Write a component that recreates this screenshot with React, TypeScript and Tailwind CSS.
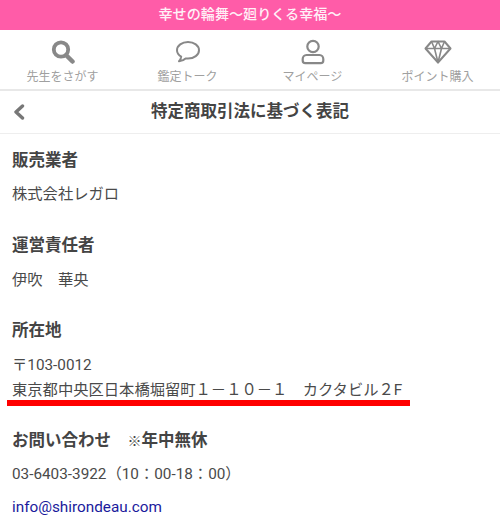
import React from "react";

const font = { fontFamily: '"Roboto","Noto Sans CJK JP","Noto Sans",sans-serif' };

function Nav({ label, children }: { label: string; children: React.ReactNode }) {
  return (
    <div className="flex w-[125px] flex-col items-center">
      <div className="flex h-[26px] items-center justify-center">{children}</div>
      <div className="mt-[5px] text-[12px] leading-[14px] text-[#a0a0a0]">{label}</div>
    </div>
  );
}

function Section({ title, children, className, bodyClass }: { title: React.ReactNode; children: React.ReactNode; className: string; bodyClass: string }) {
  return (
    <section className={className}>
      <h2 className="text-[16.5px] font-bold leading-[24px] text-[#444444]">{title}</h2>
      <div className={bodyClass}>{children}</div>
    </section>
  );
}

export default function App() {
  return (
    <div className="relative h-[526px] w-[500px] overflow-hidden bg-white" style={font}>
      <div className="flex h-[30px] items-center justify-center bg-[#ff5ca8] text-[14.1px] font-medium text-[#fff0f7]">
        幸せの輪舞～廻りくる幸福～
      </div>
      <nav className="flex h-[61px] border-b-2 border-[#e8e8e8] pt-[9px]">
        <Nav label="先生をさがす">
          <svg width="26" height="24" viewBox="0 0 26 24" fill="none" stroke="#888888">
            <circle cx="11" cy="9.5" r="7.2" strokeWidth="3.8" />
            <path d="M16.5 15.5 L22.5 21.5" strokeWidth="4.5" strokeLinecap="round" />
          </svg>
        </Nav>
        <Nav label="鑑定トーク">
          <svg width="26" height="24" viewBox="0 0 26 24" fill="none" stroke="#888888" strokeWidth="2">
            <path d="M13 2C6.9 2 2 5.6 2 10.2c0 2.7 1.7 5 4.2 6.5-.2 1.7-1 3.4-2.2 4.6 2.6-.3 5-1.4 6.6-2.9 .8.1 1.6.2 2.4.2 6.1 0 11-3.7 11-8.4S19.1 2 13 2Z" strokeLinejoin="round" />
          </svg>
        </Nav>
        <Nav label="マイページ">
          <svg width="24" height="26" viewBox="0 0 24 26" fill="none" stroke="#888888" strokeWidth="2.2">
            <circle cx="12" cy="7.5" r="5.7" />
            <path d="M5.5 16h13c2.2 0 3.8 1.8 3.8 4v1.5c0 1.6-1 2.7-2.6 2.7H4.3c-1.6 0-2.6-1.1-2.6-2.7V20c0-2.2 1.6-4 3.8-4Z" />
          </svg>
        </Nav>
        <Nav label="ポイント購入">
          <svg width="28" height="24" viewBox="0 0 28 24" fill="none" stroke="#888888" strokeWidth="2" strokeLinejoin="round">
            <path d="M7.5 1.5h13l6 7L14 22.5 1.5 8.5Z" />
            <path d="M1.5 8.5h25M7.5 1.5l3 7L14 22.5l3.5-14 3-7M10.5 8.5 14 1.5l3.5 7" strokeWidth="1.6" />
          </svg>
        </Nav>
      </nav>
      <header className="relative flex h-[43px] items-center justify-center border-b border-[#eeeeee]">
        <svg className="absolute left-[13px] top-[13px]" width="12" height="16" viewBox="0 0 12 16" fill="none" stroke="#777777" strokeWidth="3.4" strokeLinecap="round" strokeLinejoin="round">
          <path d="M9.5 2 3 8l6.5 6" />
        </svg>
        <h1 className="text-[16.5px] font-bold text-[#444444]">特定商取引法に基づく表記</h1>
      </header>
      <main className="flex flex-col pt-[15px]">
        <Section title="販売業者" className="px-3 pb-[27px]" bodyClass="mt-[9px] text-[15.3px] leading-[25px] text-[#4a4a4a]">
          <p>株式会社レガロ</p>
        </Section>
        <Section title="運営責任者" className="px-3 pb-[26px]" bodyClass="mt-[10px] text-[15.3px] leading-[25px] text-[#4a4a4a]">
          <p>伊吹　華央</p>
        </Section>
        <Section title="所在地" className="px-3 pb-[26px]" bodyClass="mt-[10px] text-[15.3px] leading-[25px] text-[#4a4a4a]">
          <p>〒103-0012</p>
          <p>東京都中央区日本橋堀留町１－１０－１　カクタビル２F</p>
        </Section>
        <Section
          title={<>お問い合わせ　<span className="text-[14px]">※</span>年中無休</>}
          className="px-3"
          bodyClass="mt-[9px] text-[15.3px] leading-[25px] text-[#4a4a4a]"
        >
          <p>03-6403-3922（10：00-18：00）</p>
          <p className="mt-[8px] text-[#1a1a9c]">info@shirondeau.com</p>
        </Section>
      </main>
      <div className="absolute left-[7px] top-[400px] h-[6px] w-[403px] bg-[#ff0000]" />
    </div>
  );
}
